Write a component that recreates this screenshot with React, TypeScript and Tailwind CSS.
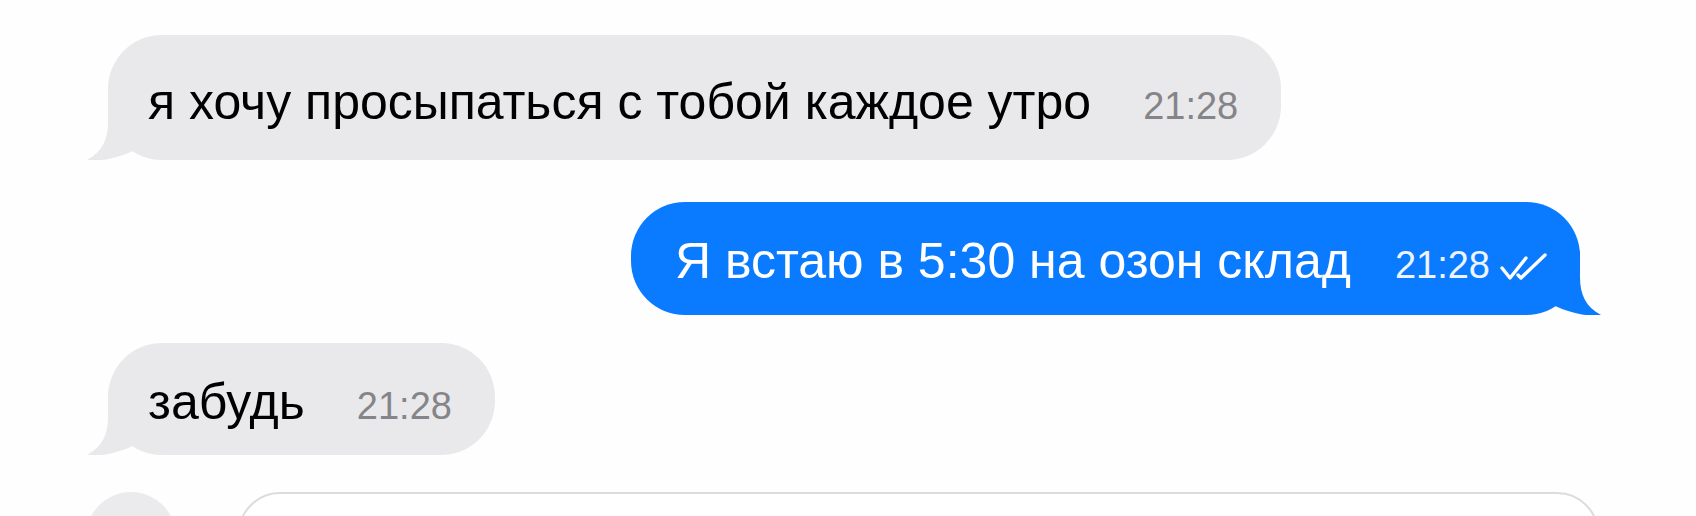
import type { ReactNode } from 'react'

type Msg = {
  id: number
  text: string
  time: string
  mine: boolean
  read?: boolean
}

const messages: Msg[] = [
  { id: 1, text: 'я хочу просыпаться с тобой каждое утро', time: '21:28', mine: false },
  { id: 2, text: 'Я встаю в 5:30 на озон склад', time: '21:28', mine: true, read: true },
  { id: 3, text: 'забудь', time: '21:28', mine: false },
]

// хвостик пузыря — рисуем слева, для своих сообщений зеркалим
function Tail({ className }: { className: string }) {
  return (
    <svg width="50" height="64" viewBox="0 0 50 64" className={className}>
      <path d="M21 0 L21 26 C21 44 15 56 0 64 C16 66 33 61 48 54 L48 0 Z" fill="currentColor" />
    </svg>
  )
}

function DoubleCheck() {
  return (
    <svg width="48" height="28" viewBox="0 0 48 28" className="ml-[10px] shrink-0 translate-y-[3px]">
      <path d="M2 15 L10 25 L26 5" fill="none" stroke="white" strokeWidth="3.4" strokeLinecap="round" strokeLinejoin="round" />
      <path d="M18 22 L21 25 L45 2" fill="none" stroke="white" strokeWidth="3.4" strokeLinecap="round" strokeLinejoin="round" />
    </svg>
  )
}

function Bubble({ msg, className, children }: { msg: Msg; className: string; children?: ReactNode }) {
  return (
    <div
      className={`relative flex items-center rounded-[54px] ${
        msg.mine ? 'bg-[#0a7bfe] text-white pl-[44px] pr-[32px]' : 'bg-[#e9e9eb] text-black pl-[40px] pr-[43px]'
      } ${className}`}
    >
      {msg.mine ? (
        <Tail className="absolute -right-[21px] bottom-0 -scale-x-100 text-[#0a7bfe]" />
      ) : (
        <Tail className="absolute -left-[21px] bottom-0 text-[#e9e9eb]" />
      )}
      <div className="relative flex items-baseline">
        <span className="whitespace-nowrap text-[50px] leading-none">{msg.text}</span>
        <span
          className={`whitespace-nowrap text-[38px] leading-none ${
            msg.mine ? 'ml-[44px] text-[#eef4ff]' : 'ml-[52px] text-[#858589]'
          }`}
        >
          {msg.time}
        </span>
        {children}
      </div>
    </div>
  )
}

export default function App() {
  const [first, second, third] = messages
  return (
    <div className="h-[516px] w-full overflow-hidden bg-[#fefefe] font-['Liberation_Sans',Arial,sans-serif]">
      <div className="flex flex-col pt-[35px]">
        <div className="flex pl-[108px]">
          <Bubble msg={first} className="h-[125px] pt-[8px]" />
        </div>

        <div className="mt-[42px] flex justify-end pr-[116px]">
          <Bubble msg={second} className="h-[113px] pt-[4px]">
            <DoubleCheck />
          </Bubble>
        </div>

        <div className="mt-[28px] flex pl-[108px]">
          <Bubble msg={third} className="h-[112px] pt-[6px]" />
        </div>

        {/* нижняя панель ввода */}
        <div className="mt-[37px] flex items-start pl-[86px] pr-[97px]">
          <div className="h-[90px] w-[90px] shrink-0 rounded-full bg-[#ebebed]" />
          <div className="ml-[62px] h-[90px] flex-1 rounded-[42px] border-2 border-[#dcdcde] bg-white" />
        </div>
      </div>
    </div>
  )
}
